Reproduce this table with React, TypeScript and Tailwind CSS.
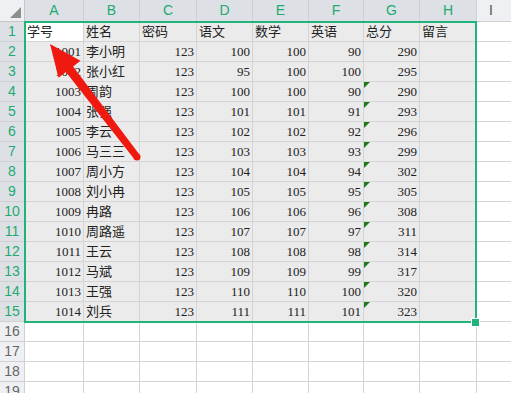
import React from "react";

const COLS = ["A", "B", "C", "D", "E", "F", "G", "H"];
const WIDTHS = ["w-[59px]", "w-[56px]", "w-[57px]", "w-[56px]", "w-[56px]", "w-[55px]", "w-[56px]", "w-[57px]"];

const HEAD = ["学号", "姓名", "密码", "语文", "数学", "英语", "总分", "留言"];

const DATA: [string, string, number, number, number, number, number][] = [
  ["1001", "李小明", 123, 100, 100, 90, 290],
  ["1002", "张小红", 123, 95, 100, 100, 295],
  ["1003", "周韵", 123, 100, 100, 90, 290],
  ["1004", "张强", 123, 101, 101, 91, 293],
  ["1005", "李云", 123, 102, 102, 92, 296],
  ["1006", "马三三", 123, 103, 103, 93, 299],
  ["1007", "周小方", 123, 104, 104, 94, 302],
  ["1008", "刘小冉", 123, 105, 105, 95, 305],
  ["1009", "冉路", 123, 106, 106, 96, 308],
  ["1010", "周路遥", 123, 107, 107, 97, 311],
  ["1011", "王云", 123, 108, 108, 98, 314],
  ["1012", "马斌", 123, 109, 109, 99, 317],
  ["1013", "王强", 123, 110, 110, 100, 320],
  ["1014", "刘兵", 123, 111, 111, 101, 323],
];

const cellFont = "font-['Liberation_Serif','Noto_Sans_CJK_SC',serif] text-[13px] text-[#222]";
const headFont = "font-['Liberation_Sans',Arial,sans-serif]";

function RowHeader({ n, active }: { n: number; active: boolean }) {
  return (
    <div
      className={`w-[25px] h-[20px] shrink-0 border-r border-b border-[#d0d0d0] flex items-center justify-center text-[14px] ${headFont} ${
        active ? "bg-[#dde0e5] text-[#1eaa70] font-medium" : "bg-[#eef0f3] text-[#666]"
      }`}
    >
      {n}
    </div>
  );
}

function Cell({
  w,
  text,
  right,
  selected,
  flag,
}: {
  w: string;
  text?: string | number;
  right?: boolean;
  selected?: boolean;
  flag?: boolean;
}) {
  return (
    <div
      className={`relative ${w} h-[20px] shrink-0 border-r border-b border-[#d4d4d4] flex items-center px-[2px] leading-none ${cellFont} ${
        right ? "justify-end" : "justify-start"
      } ${selected ? "bg-[#ebebeb]" : "bg-white"}`}
    >
      {flag && (
        <span className="absolute left-0 top-0 w-0 h-0 border-t-[6px] border-t-[#1d7a1d] border-r-[6px] border-r-transparent" />
      )}
      <span className="whitespace-nowrap">{text}</span>
    </div>
  );
}

export default function App() {
  const emptyRows = [16, 17, 18, 19];

  return (
    <div className="relative w-[511px] h-[393px] overflow-hidden bg-white select-none">
      {/* column headers */}
      <div className="flex h-[22px]">
        <div className="relative w-[25px] shrink-0 border-r border-b border-[#c8c8c8] bg-[#eef0f3]">
          <span className="absolute right-[3px] bottom-[3px] w-0 h-0 border-l-[11px] border-l-transparent border-b-[11px] border-b-[#8e8e8e]" />
        </div>
        {COLS.map((c, i) => (
          <div
            key={c}
            className={`${WIDTHS[i]} shrink-0 border-r border-b border-[#d0d0d0] bg-[#dde0e5] flex items-center justify-center text-[14px] font-medium text-[#1eaa70] ${headFont}`}
          >
            {c}
          </div>
        ))}
        <div className="flex-1 border-b border-[#d0d0d0] bg-[#eef0f3] flex items-center justify-center text-[14px] text-[#555] pr-[6px]">
          <span className={headFont}>I</span>
        </div>
      </div>

      {/* row 1 */}
      <div className="flex">
        <RowHeader n={1} active />
        {HEAD.map((h, i) => (
          <Cell key={h} w={WIDTHS[i]} text={h} selected={i !== 0} />
        ))}
        <div className="flex-1 h-[20px] border-b border-[#d4d4d4]" />
      </div>

      {DATA.map((r, ri) => (
        <div key={r[0]} className="flex">
          <RowHeader n={ri + 2} active />
          <Cell w={WIDTHS[0]} text={r[0]} right selected />
          <Cell w={WIDTHS[1]} text={r[1]} selected />
          <Cell w={WIDTHS[2]} text={r[2]} right selected />
          <Cell w={WIDTHS[3]} text={r[3]} right selected />
          <Cell w={WIDTHS[4]} text={r[4]} right selected />
          <Cell w={WIDTHS[5]} text={r[5]} right selected />
          <Cell w={WIDTHS[6]} text={r[6]} right selected flag={ri >= 2} />
          <Cell w={WIDTHS[7]} selected />
          <div className="flex-1 h-[20px] border-b border-[#d4d4d4]" />
        </div>
      ))}

      {emptyRows.map((n) => (
        <div key={n} className="flex">
          <RowHeader n={n} active={false} />
          {COLS.map((c, i) => (
            <Cell key={c} w={WIDTHS[i]} />
          ))}
          <div className="flex-1 h-[20px] border-b border-[#d4d4d4]" />
        </div>
      ))}

      {/* selection frame */}
      <div className="absolute left-[24px] top-[21px] w-[453px] h-[302px] border-2 border-[#21b47a] pointer-events-none" />
      <div className="absolute left-[471px] top-[318px] w-[9px] h-[9px] bg-[#21b47a] border-[1.5px] border-white pointer-events-none" />

      {/* red annotation arrow */}
      <svg className="absolute left-0 top-0 pointer-events-none" width="511" height="393" viewBox="0 0 511 393">
        <path d="M134.2 159.1 L139.8 154.9 L73.1 66.6 L80.5 60.8 L50 44 L58.5 77.8 L65.9 72 Z" fill="#f0190f" />
        <circle cx="137" cy="157" r="3.5" fill="#f0190f" />
      </svg>
    </div>
  );
}
